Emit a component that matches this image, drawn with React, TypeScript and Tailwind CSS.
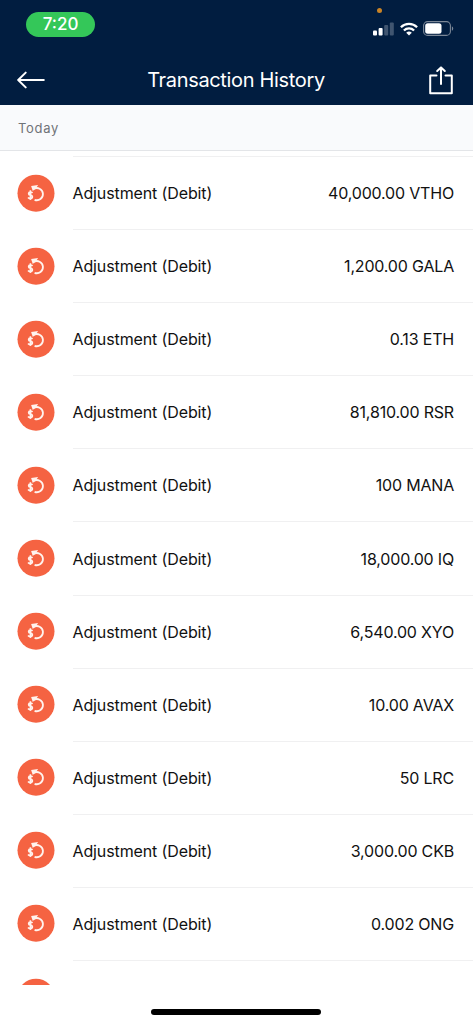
interface Transaction {
  label: string
  amount: string
}

const transactions: Transaction[] = [
  { label: "Adjustment (Debit)", amount: "40,000.00 VTHO" },
  { label: "Adjustment (Debit)", amount: "1,200.00 GALA" },
  { label: "Adjustment (Debit)", amount: "0.13 ETH" },
  { label: "Adjustment (Debit)", amount: "81,810.00 RSR" },
  { label: "Adjustment (Debit)", amount: "100 MANA" },
  { label: "Adjustment (Debit)", amount: "18,000.00 IQ" },
  { label: "Adjustment (Debit)", amount: "6,540.00 XYO" },
  { label: "Adjustment (Debit)", amount: "10.00 AVAX" },
  { label: "Adjustment (Debit)", amount: "50 LRC" },
  { label: "Adjustment (Debit)", amount: "3,000.00 CKB" },
  { label: "Adjustment (Debit)", amount: "0.002 ONG" },
]

function SignalIcon() {
  return (
    <svg width="22" height="14" viewBox="0 0 22 14" fill="white">
      <rect x="0" y="8.5" width="4" height="5" rx="1" />
      <rect x="5.6" y="6" width="4" height="7.5" rx="1" />
      <rect x="11.2" y="3" width="4" height="10.5" rx="1" opacity="0.25" />
      <rect x="16.8" y="0.5" width="4" height="13" rx="1" opacity="0.25" />
    </svg>
  )
}

function WifiIcon() {
  return (
    <svg width="18" height="14" viewBox="0 0 18 14" fill="none" stroke="white" strokeWidth="2.3">
      <path d="M0.9 5.2a11.6 11.6 0 0 1 16.2 0" />
      <path d="M3.9 8.5a7.3 7.3 0 0 1 10.2 0" />
      <path d="M9 13.4 6.2 10.7a4.1 4.1 0 0 1 5.6 0Z" fill="white" stroke="none" />
    </svg>
  )
}

function BatteryIcon() {
  return (
    <svg width="31" height="15" viewBox="0 0 31 15" fill="none">
      <rect x="0.6" y="0.6" width="26.8" height="13.8" rx="4" stroke="#7b8797" strokeWidth="1.1" />
      <rect x="2.2" y="2.2" width="16.3" height="10.6" rx="2.5" fill="white" />
      <path d="M28.9 5.2c1.8.9 1.8 3.7 0 4.6Z" fill="#7b8797" />
    </svg>
  )
}

function BackIcon() {
  return (
    <svg width="28" height="18" viewBox="0 0 28 18" fill="none" stroke="white" strokeWidth="2" strokeLinecap="round" strokeLinejoin="round">
      <path d="M8.7 1.6 1.2 9l7.5 7.4M1.4 9h25.4" />
    </svg>
  )
}

function ShareIcon() {
  return (
    <svg width="24" height="29" viewBox="0 0 24 29" fill="none" stroke="white" strokeWidth="2" strokeLinecap="round" strokeLinejoin="round">
      <path d="M7.5 9.6H1.2v17.6h21.6V9.6h-6.3" />
      <path d="M12 18V1.6M8.2 5 12 1.4 15.8 5" />
    </svg>
  )
}

function AdjustmentIcon() {
  return (
    <svg className="h-[38px] w-[38px] shrink-0" viewBox="-0.5 -0.7 38 38" fill="none">
      <circle cx="18.5" cy="18.5" r="18.5" fill="#f56342" />
      {/* Return arrow */}
      <path d="M16.2 14.2a6.1 6.1 0 1 1 .9 10.9" stroke="#fff3ee" strokeWidth="1.8" />
      <path d="M13.6 11.2 20.6 10.4 18.6 13.4 15.3 16.3Z" fill="#fff3ee" />
      {/* Dollar sign */}
      <path
        d="M15 18.2c-.5-.6-1.2-.8-2-.8-2.5 0-2.5 2.6-.2 3 2.9.5 2.7 3.5-.1 3.5-.9 0-1.7-.4-2.2-1M12.9 15.6v9.8"
        stroke="#fff3ee"
        strokeWidth="1.6"
      />
    </svg>
  )
}

export default function App() {
  return (
    <div className="flex h-[1024px] w-[473px] flex-col overflow-hidden bg-white font-['Inter',sans-serif]">
      <header className="relative h-[105px] shrink-0 bg-[#011d40] text-white">
        {/* Recording indicator */}
        <span className="absolute left-[377px] top-[8px] h-[5px] w-[5px] rounded-full bg-[#ca8426]"></span>

        <div className="flex h-[55px] items-start justify-between pl-[26px] pr-[19px] pt-3">
          <div className="flex h-[25px] w-[69px] items-center justify-center rounded-full bg-[#34c759] text-[17px] font-medium leading-none">
            7:20
          </div>
          <div className="flex items-center gap-[5px] pt-[9px]">
            <SignalIcon />
            <WifiIcon />
            <BatteryIcon />
          </div>
        </div>

        <div className="flex h-[50px] items-center justify-between pl-[17px] pr-5">
          <button aria-label="Back">
            <BackIcon />
          </button>
          <h1 className="pr-[2px] text-[20px] leading-none tracking-[-0.34px]">Transaction History</h1>
          <button aria-label="Share">
            <ShareIcon />
          </button>
        </div>
      </header>

      <div className="flex h-[46px] shrink-0 items-center border-b border-[#e3e5e8] bg-[#f9fafc] pl-[18px] pt-[2px] text-[13px] tracking-[0.7px] text-[#707378]">
        Today
      </div>

      <main className="h-[834px] shrink-0 overflow-hidden pt-[5px]">
        {transactions.map((tx) => (
          <div key={tx.amount} className="flex h-[73.1px] items-center pl-[17px]">
            <AdjustmentIcon />
            <div className="ml-[17.5px] flex h-full flex-1 items-center justify-between border-t border-[#f0f0f1] pr-[19px] text-[16px] text-[#111]">
              <span className="tracking-[-0.12px]">{tx.label}</span>
              <span className="tracking-[-0.18px]">{tx.amount}</span>
            </div>
          </div>
        ))}
        <div className="flex h-[73px] items-center pl-[17px]">
          <AdjustmentIcon />
          <div className="ml-[17.5px] h-full flex-1 border-t border-[#f0f0f1]"></div>
        </div>
      </main>

      <div className="ml-[151px] mt-6 h-[6px] w-[170px] shrink-0 rounded-full bg-black"></div>
    </div>
  )
}
